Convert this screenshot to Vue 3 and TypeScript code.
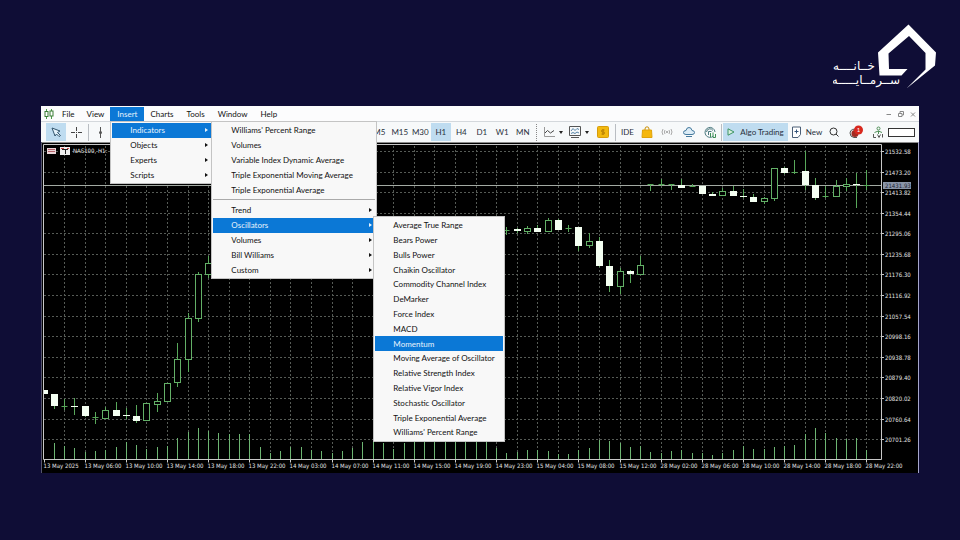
<script setup lang="ts">
interface MenuEntry {
  label: string
  arrow?: boolean
  active?: boolean
  ruled?: boolean
}

type CandleKind = 'full' | 'open' | 'doji'
type Candle = [index: number, high: number, top: number, bottom: number, low: number, kind: CandleKind]

const insertMenu: MenuEntry[] = [
  { label: 'Indicators', arrow: true, active: true },
  { label: 'Objects', arrow: true },
  { label: 'Experts', arrow: true },
  { label: 'Scripts', arrow: true },
]

const indicatorsMenu: MenuEntry[] = [
  { label: "Williams' Percent Range" },
  { label: 'Volumes' },
  { label: 'Variable Index Dynamic Average' },
  { label: 'Triple Exponential Moving Average' },
  { label: 'Triple Exponential Average' },
  { label: 'Trend', arrow: true, ruled: true },
  { label: 'Oscillators', arrow: true, active: true },
  { label: 'Volumes', arrow: true },
  { label: 'Bill Williams', arrow: true },
  { label: 'Custom', arrow: true },
]

const oscillators = [
  'Average True Range',
  'Bears Power',
  'Bulls Power',
  'Chaikin Oscillator',
  'Commodity Channel Index',
  'DeMarker',
  'Force Index',
  'MACD',
  'Momentum',
  'Moving Average of Oscillator',
  'Relative Strength Index',
  'Relative Vigor Index',
  'Stochastic Oscillator',
  'Triple Exponential Average',
  "Williams' Percent Range",
]

const menuBefore = ['File', 'View']
const menuAfter = ['Charts', 'Tools', 'Window', 'Help']
const timeframes = ['M5', 'M15', 'M30', 'H1', 'H4', 'D1', 'W1', 'MN']

const axisBottom = 459.5
const barStep = 10.285
const barX = (i: number): number => Math.round(43.6 + barStep * i) + 0.5
const rowY = (k: number): number => Math.round(151 + 20.58 * k) + 0.5

const gridColumns = Array.from({ length: 40 }, (_, k) => barX(2 + 2 * k))
const prices = Array.from({ length: 15 }, (_, k) => (21532.58 - 59.38 * k).toFixed(2))
const times = [
  '13 May 2025', '13 May 06:00', '13 May 10:00', '13 May 14:00', '13 May 18:00', '13 May 22:00',
  '14 May 03:00', '14 May 07:00', '14 May 11:00', '14 May 15:00', '14 May 19:00', '14 May 23:00',
  '15 May 04:00', '15 May 08:00', '15 May 12:00', '28 May 02:00', '28 May 06:00', '28 May 10:00',
  '28 May 14:00', '28 May 18:00', '28 May 22:00',
]

const candles: Candle[] = [
  [0, 390, 390, 394, 394, 'full'],
  [1, 394, 394, 406, 409, 'full'],
  [2, 399, 406, 406, 410, 'doji'],
  [3, 398, 406, 407, 415, 'full'],
  [4, 406, 406, 416, 417, 'full'],
  [5, 412, 417, 417, 424, 'doji'],
  [6, 407, 410, 418, 418, 'open'],
  [7, 402, 410, 416, 416, 'full'],
  [8, 408, 415, 416, 419, 'full'],
  [9, 405, 416, 421, 423, 'full'],
  [10, 403, 403, 420, 421, 'open'],
  [11, 393, 401, 404, 412, 'open'],
  [12, 383, 383, 401, 402, 'open'],
  [13, 343, 359, 382, 387, 'open'],
  [14, 313, 318, 359, 372, 'open'],
  [15, 272, 274, 318, 322, 'open'],
  [16, 256, 263, 274, 278, 'open'],
  [45, 227, 230, 230, 235, 'doji'],
  [46, 228, 229, 231, 233, 'full'],
  [47, 226, 228, 231, 234, 'open'],
  [48, 225, 228, 232, 232, 'full'],
  [49, 218, 220, 231, 231, 'open'],
  [50, 219, 220, 230, 230, 'full'],
  [51, 225, 228, 228, 232, 'doji'],
  [52, 227, 227, 246, 251, 'full'],
  [53, 233, 241, 245, 248, 'open'],
  [54, 237, 241, 266, 267, 'full'],
  [55, 260, 266, 286, 292, 'full'],
  [56, 268, 271, 286, 294, 'open'],
  [57, 270, 271, 274, 283, 'full'],
  [58, 256, 265, 274, 275, 'open'],
  [59, 184, 184, 184, 191, 'doji'],
  [60, 179, 184, 184, 186, 'doji'],
  [61, 184, 184, 184, 190, 'doji'],
  [62, 179, 185, 188, 188, 'full'],
  [63, 184, 186, 186, 187, 'doji'],
  [64, 186, 186, 194, 194, 'full'],
  [65, 192, 194, 196, 196, 'full'],
  [66, 188, 191, 195, 196, 'open'],
  [67, 186, 191, 196, 196, 'full'],
  [68, 189, 196, 197, 198, 'full'],
  [69, 194, 197, 202, 202, 'full'],
  [70, 197, 198, 201, 204, 'open'],
  [71, 168, 168, 198, 201, 'open'],
  [72, 167, 168, 173, 174, 'full'],
  [73, 160, 172, 172, 174, 'doji'],
  [74, 151, 171, 185, 190, 'full'],
  [75, 178, 185, 198, 200, 'full'],
  [76, 186, 196, 196, 198, 'doji'],
  [77, 180, 186, 196, 196, 'open'],
  [78, 178, 184, 186, 191, 'open'],
  [79, 173, 184, 185, 208, 'full'],
  [80, 170, 185, 185, 190, 'doji'],
]

const volumeTops = [
  443, 446, 448, 452, 451, 450, 447, 442, 445, 449, 447, 446, 438, 432, 428, 431, 433, 434, 434, 434,
  447, 453, 451, 447, 447, 450, 451, 453, 451, 448, 442, 440, 443, 449, 443, 440, 438, 436, 436, 437,
  438, 439, 440, 448, 453, 452, 450, 450, 451, 454, 454, 450, 448, 440, 441, 443, 447, 446, 452, 453,
  451, 450, 453, 453, 455, 453, 450, 446, 449, 449, 447, 446, 445, 434, 428, 433, 438, 439, 438, 450,
]
</script>

<template>
  <div class="page">
    <header class="brand">
      <svg class="logo" viewBox="0 0 104 68" role="img" aria-label="خانه سرمایه">
        <path d="M75.500 .5 103 28.500 102 41.500 73.500 64.500 92.500 45.500V29L76 12 55.500 29.500 56 45H74.500L68.500 51.500H46.500L45 28.500Z" fill="#fff" />
        <text class="logo-text" x="42" y="46" direction="rtl">خــانــــه</text>
        <text class="logo-text" x="67" y="60" direction="rtl">ســرمــایـــــه</text>
      </svg>
    </header>

    <main class="terminal">
      <nav class="menubar" aria-label="Main menu">
        <svg class="app-icon" viewBox="0 0 10 10" aria-hidden="true">
          <path d="M2.500 0V10M7.500 0V10" stroke="#4c9a46" />
          <rect x="1" y="2.500" width="3" height="5" fill="#fff" stroke="#3a7d36" />
          <rect x="6" y="2" width="3" height="5" fill="#fff" stroke="#3a7d36" />
        </svg>
        <button v-for="name in menuBefore" :key="name" type="button" class="menu-title">{{ name }}</button>
        <div class="menu-root">
          <button type="button" class="menu-title current" aria-expanded="true">Insert</button>
          <ul class="menu menu-insert">
            <li v-for="entry in insertMenu" :key="entry.label" class="row">
              <button type="button" class="entry" :class="{ active: entry.active }">
                {{ entry.label }}<span v-if="entry.arrow" class="arrow"></span>
              </button>
              <ul v-if="entry.active" class="menu menu-indicators">
                <li v-for="(item, n) in indicatorsMenu" :key="n" class="row" :class="{ ruled: item.ruled }">
                  <button type="button" class="entry" :class="{ active: item.active }">
                    {{ item.label }}<span v-if="item.arrow" class="arrow"></span>
                  </button>
                  <ul v-if="item.active" class="menu menu-oscillators">
                    <li v-for="name in oscillators" :key="name" class="row">
                      <button type="button" class="entry" :class="{ active: name === 'Momentum' }">{{ name }}</button>
                    </li>
                  </ul>
                </li>
              </ul>
            </li>
          </ul>
        </div>
        <button v-for="name in menuAfter" :key="name" type="button" class="menu-title after">{{ name }}</button>
        <div class="window-controls">
          <button type="button" aria-label="Minimize"><svg viewBox="0 0 8 8"><path d="M1.500 4.500H6" /></svg></button>
          <button type="button" aria-label="Restore"><svg viewBox="0 0 8 8"><path d="M1.500 3.500H5V6.500H1.500ZM3 3V1.500H6.500V5H5" /></svg></button>
          <button type="button" aria-label="Close"><svg viewBox="0 0 8 8"><path d="M2 2.500 6 6.500M6 2.500 2 6.500" /></svg></button>
        </div>
      </nav>

      <div class="toolbar" role="toolbar" aria-label="Tools">
        <button type="button" class="tool pressed" aria-label="Cursor">
          <svg class="icon" viewBox="0 0 12 12"><path d="M2 2 10 5 7.500 6.500 10.500 9.500 9 10.500 6.500 8 5 10Z" fill="#e4f2fb" stroke="#33566e" /></svg>
        </button>
        <button type="button" class="tool" aria-label="Crosshair">
          <svg class="icon" viewBox="0 0 12 12"><path d="M6.500 1V5M6.500 8V12M1 6.500H5M8 6.500H12M6 6.500H7" stroke="#444" /></svg>
        </button>
        <span class="divider"></span>
        <button type="button" class="tool" aria-label="Vertical line">
          <svg class="icon" viewBox="0 0 12 12"><path d="M5.500 1V12" stroke="#555" /><circle cx="5.500" cy="6.500" r="1.500" fill="#555" /></svg>
        </button>

        <div class="frames">
          <button v-for="frame in timeframes" :key="frame" type="button" class="frame" :class="{ pressed: frame === 'H1' }">{{ frame }}</button>
        </div>
        <span class="divider dotted"></span>
        <button type="button" class="tool drop" aria-label="Chart type">
          <svg class="icon" viewBox="0 0 12 12"><path d="M1.500 1V10.500H12" stroke="#999" /><path d="M2 7 4.500 4.500 7.500 7 11 4.500" stroke="#444" /></svg>
          <span class="caret"></span>
        </button>
        <button type="button" class="tool drop" aria-label="Templates">
          <svg class="icon" viewBox="0 0 12 12"><path d="M.5 .5H11.500V9.500H.5ZM2 11.500H10" stroke="#555" /><path d="M2 5 4 2.500 6 4.500 8 2.500 10 3.500M2 7.500 4 6.500 6 7.500 8 6 10 7" stroke="#5684a8" /></svg>
          <span class="caret"></span>
        </button>
        <button type="button" class="tool dollar" aria-label="New order">
          <svg class="icon" viewBox="0 0 12 12"><rect x=".5" y=".5" width="11" height="11" rx="1" fill="#f2b90f" stroke="#d79c0a" /><path d="M7.500 4H5.500Q4.500 4 4.500 5T5.500 6H6.500Q7.500 6 7.500 7T6.500 8H4.500M6 3V9" stroke="#b47d04" /></svg>
        </button>
        <span class="divider"></span>
        <button type="button" class="tool ide">IDE</button>
        <button type="button" class="tool" aria-label="Market">
          <svg class="icon" viewBox="0 0 12 12"><path d="M4 5V3Q4 .8 6 .8T8 3V5" stroke="#c98f08" /><path d="M1.500 4H10.500L11 11.500H1Z" fill="#f5b70d" stroke="#dfa20a" /></svg>
        </button>
        <button type="button" class="tool" aria-label="Signals">
          <svg class="icon" viewBox="0 0 12 12"><circle cx="6" cy="6" r="1" fill="#999" /><path d="M4 4Q2.800 6 4 8M8 4Q9.200 6 8 8M2 3Q0 6 2 9M10 3Q12 6 10 9" stroke="#aaa" /></svg>
        </button>
        <button type="button" class="tool cloud" aria-label="Virtual hosting">
          <svg class="icon" viewBox="0 0 12 12"><path d="M3 8.500Q.5 8.500 .5 6.500T3 4.500Q3.500 1.500 6 1.500T9 4.500Q11.500 4.500 11.500 6.500T9 8.500Z" fill="#dcecf6" stroke="#44799d" /><path d="M3 10.500H9" stroke="#44799d" /></svg>
        </button>
        <button type="button" class="tool globe" aria-label="Community">
          <svg class="icon" viewBox="0 0 12 12"><path d="M9.500 10A5 5 0 1 1 11 6M2.500 6A3.500 3.500 0 0 1 9 4.500M4.500 9V5.500H7.500" stroke="#4c7a80" /><path d="M6.500 7V11M9 6.500V11.500H11.500V8" stroke="#3e8f56" /></svg>
        </button>
        <span class="divider slim"></span>
        <button type="button" class="algo pressed">
          <svg class="icon small" viewBox="0 0 8 8"><path d="M1 .8 7 4 1 7.200Z" fill="#d8f0df" stroke="#3d9465" /></svg>Algo Trading
        </button>
        <button type="button" class="new">
          <svg class="icon new-icon" viewBox="0 0 10 12"><path d="M.5 1H8.500V8.500L6 11.500H.5Z" fill="#fff" stroke="#4b5f77" /><path d="M4.500 3.500V7.500M2.500 5.500H6.500" stroke="#35557a" /></svg>New
        </button>
        <button type="button" class="tool search" aria-label="Search">
          <svg class="icon" viewBox="0 0 12 12"><circle cx="5.500" cy="5.500" r="3.500" stroke="#333" /><path d="M8 8 10.500 10.500" stroke="#333" /></svg>
        </button>
        <button type="button" class="tool alerts" aria-label="Notifications, 1 new">
          <svg class="alert-icon" viewBox="0 0 16 14"><path d="M2 8A4 4 0 0 1 9 5.500M2 8Q2 12 6 12.500H9" stroke="#555" fill="#ddd" /><circle cx="7" cy="8.500" r="3.500" fill="#a32a22" /><circle cx="10.500" cy="5" r="4.500" fill="#d8281e" /><text x="10.500" y="7" class="badge">1</text></svg>
        </button>
        <button type="button" class="tool search" aria-label="Connection status">
          <svg class="icon" viewBox="0 0 12 12"><circle cx="6.500" cy="2.500" r="1.500" stroke="#4f8f58" /><path d="M2.500 6.500Q6.500 3.500 10 6.500M6.500 5V8" stroke="#4f8f58" /><path d="M1.500 8V11.500H4M5.500 8.500 7 11.500 8.500 8.500M10.500 8V11.500" stroke="#555" /></svg>
        </button>
        <input class="level" type="text" aria-label="Search symbols" />
      </div>

      <svg class="chart" viewBox="41 142 878 331" role="img" aria-label="NAS100, H1 candlestick chart">
        <defs>
          <clipPath id="plot"><rect x="43" y="144" width="838" height="316" /></clipPath>
        </defs>
        <rect x="41" y="142" width="878" height="331" fill="#000" />
        <path d="M41 142.500H919" stroke="#8a8a8a" />
        <path d="M41.500 142V473" stroke="#55556c" />
        <path d="M918.500 142V473" stroke="#a6a6cc" />
        <g class="grid">
          <path v-for="x in gridColumns" :key="x" :d="`M${x} 146V459`" />
          <path v-for="(price, k) in prices" :key="price" :d="`M44 ${rowY(k)}H881`" />
        </g>
        <g clip-path="url(#plot)">
          <path v-for="(top, k) in volumeTops" :key="k" class="volume" :d="`M${barX(k + 1)} ${top}V460`" />
          <path d="M43 185.500H881" stroke="#a3aaa3" />
          <g v-for="[i, high, top, bottom, low, kind] in candles" :key="i">
            <path class="wick" :d="`M${barX(i)} ${high}V${low}`" />
            <path v-if="kind === 'doji'" class="wick" :d="`M${barX(i) - 3} ${top + 0.5}h6`" />
            <rect v-else-if="kind === 'open'" class="hollow" :x="barX(i) - 3" :y="top + 0.5" width="6" :height="bottom - top" />
            <rect v-else class="solid" :x="barX(i) - 3.5" :y="top" width="7" :height="bottom - top" />
          </g>
        </g>
        <path d="M43.500 459.500V144.500H881.500V459.500Z" fill="none" stroke="#c8c8c8" />
        <g>
          <template v-for="(price, k) in prices" :key="price">
            <path :d="`M882 ${rowY(k)}h2`" stroke="#ccc" />
            <text class="axis" x="885" :y="rowY(k) + 2">{{ price }}</text>
          </template>
          <template v-for="(time, k) in times" :key="time">
            <path :d="`M${barX(4 * k)} ${axisBottom}v3`" stroke="#ccc" />
            <text class="axis" :x="barX(4 * k) - 1" y="468">{{ time }}</text>
          </template>
        </g>
        <rect x="883" y="182" width="28" height="7" fill="#8a95a8" />
        <text class="axis current-price" x="885" y="188">21431.93</text>
        <rect x="47" y="148" width="9" height="6" fill="#e9d5d8" />
        <path d="M48 149.500H55M48 151.500H55" stroke="#b4626a" />
        <rect x="60" y="147" width="10" height="8" fill="#eee" />
        <path d="M61 148.500H64M67 148.500H69" stroke="#c44" />
        <path d="M62 149.500H68M65.500 149V154" stroke="#222" />
        <text class="axis" x="73" y="153">NAS100, H1:</text>
      </svg>
    </main>
  </div>
</template>

<style>
body {
  margin: 0;
  background: #0f0d36;
}
</style>

<style scoped>
.page {
  min-height: 100vh;
  box-sizing: border-box;
  background: #0f0d36;
  font-family: Lato, 'Open Sans', sans-serif;
  font-size: 8px;
  line-height: 12px;
  color: #111;
}
.brand {
  display: flex;
  justify-content: flex-end;
  padding: 24px 23px 14px;
}
.logo {
  width: 104px;
  height: 68px;
}
.logo-text {
  font-family: 'DejaVu Sans', sans-serif;
  font-size: 12px;
  fill: #fff;
}
.terminal {
  margin: 0 41px;
}
button {
  margin: 0;
  padding: 0;
  border: 0;
  background: none;
  font: inherit;
  color: inherit;
  white-space: nowrap;
}
.menubar {
  display: flex;
  align-items: center;
  height: 15px;
  padding: 1px 2px 0;
  box-sizing: border-box;
  background: #fcfcfd;
}
.app-icon {
  width: 10px;
  height: 10px;
  margin: 0 2px 0 1px;
}
.menu-title {
  height: 14px;
  padding: 0 6px;
}
.after {
  padding-right: 7px;
}
.current {
  padding: 0 7px;
  background: #0b78d6;
  color: #e3f1fc;
}
.menu-root {
  position: relative;
  display: flex;
}
.menu {
  position: absolute;
  z-index: 2;
  display: flex;
  flex-direction: column;
  box-sizing: border-box;
  margin: 0;
  padding: 1px;
  border: 1px solid #c4c4c4;
  background: #f8f8f8;
  list-style: none;
  color: #111;
}
.menu-insert {
  top: 100%;
  left: 0;
  width: 103px;
  height: 63px;
}
.menu-indicators {
  top: -2px;
  left: 100%;
  width: 166px;
  height: 158px;
}
.menu-oscillators {
  top: -2px;
  left: calc(100% - 2px);
  width: 132px;
  height: 226px;
}
.row {
  position: relative;
  flex: 1 1 0;
  display: flex;
}
.ruled {
  margin-top: 2px;
  padding-top: 3px;
  border-top: 1px solid #aaa;
}
.entry {
  position: relative;
  flex: 1;
  display: flex;
  align-items: center;
  justify-content: space-between;
  padding: 0 3px 0 18px;
}
.entry.active {
  background: #0b78d6;
  color: #e8f3fc;
}
.arrow {
  border: 2px solid transparent;
  border-left: 3px solid currentColor;
  border-right: 0;
}
.window-controls {
  display: flex;
  gap: 4px;
  margin-left: auto;
}
.window-controls button {
  display: flex;
}
.window-controls svg {
  width: 8px;
  height: 8px;
  fill: none;
  stroke: #888;
}
.toolbar {
  display: flex;
  align-items: center;
  height: 21px;
  padding: 0 4px 0 5px;
  box-sizing: border-box;
  border-top: 1px solid #d4d8dc;
  background: #f7f9fa;
  color: #28303c;
}
.toolbar button {
  flex: none;
  display: flex;
  align-items: center;
  justify-content: center;
  height: 18px;
}
.tool {
  width: 20px;
}
.toolbar .pressed {
  background: #bfdcf0;
}
.icon {
  width: 12px;
  height: 12px;
  fill: none;
}
.small {
  width: 8px;
  height: 8px;
}
.new-icon {
  width: 10px;
}
.divider {
  flex: none;
  width: 1px;
  height: 17px;
  margin: 0 2px;
  background: #b9bdc2;
}
.slim {
  margin: 0 1px 0 2px;
}
.dotted {
  margin: 0 3px;
  background: none;
  border-left: 1px dotted #888;
  width: 0;
}
.frames {
  display: flex;
  width: 164px;
  margin-left: auto;
}
.toolbar .frame {
  flex: 1 1 0;
}
.toolbar .drop {
  width: 26px;
  gap: 4px;
}
.caret {
  border: 2px solid transparent;
  border-top: 3px solid #222;
  border-bottom: 0;
}
.dollar {
  width: 21px;
}
.ide {
  width: 19px;
}
.cloud {
  width: 24px;
}
.globe {
  width: 18px;
}
.algo {
  width: 65px;
  gap: 5px;
}
.new {
  width: 38px;
  gap: 4px;
}
.search {
  width: 16px;
}
.alerts {
  width: 28px;
}
.alert-icon {
  width: 16px;
  height: 14px;
  fill: none;
}
.badge {
  font-size: 6px;
  fill: #fff;
  text-anchor: middle;
}
.level {
  width: 27px;
  height: 9px;
  margin: 0 0 0 2px;
  padding: 0;
  box-sizing: border-box;
  border: 1px solid #333;
  border-radius: 0;
  background: #fff;
  font: inherit;
}
.chart {
  display: block;
  width: 100%;
  height: auto;
}
.grid {
  stroke: #565b56;
  stroke-dasharray: 2 2;
}
.volume {
  stroke: #6db572;
}
.wick {
  stroke: #58a85a;
}
.hollow {
  fill: #000;
  stroke: #63b067;
}
.solid {
  fill: #f4fff2;
}
.axis {
  font-family: 'DejaVu Sans Condensed', 'DejaVu Sans', sans-serif;
  font-size: 6px;
  fill: #e4e4e4;
}
.current-price {
  fill: #1c2434;
}
</style>
